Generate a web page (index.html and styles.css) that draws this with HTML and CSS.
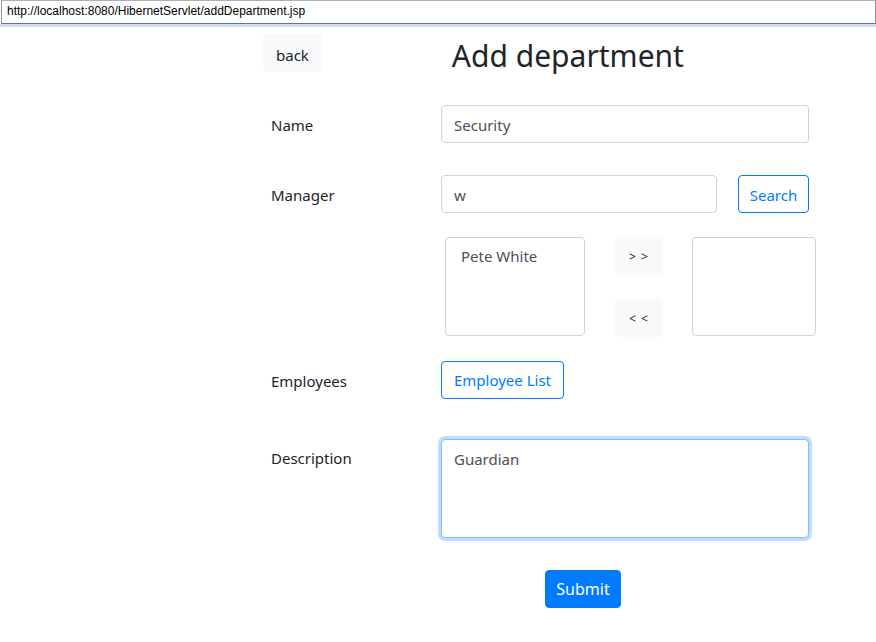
FILE: index.html
```html
<!DOCTYPE html>
<html lang="en">
<head>
<meta charset="utf-8">
<title>Add department</title>
<link rel="stylesheet" href="styles.css">
</head>
<body>
<div class="chrome">
  <div class="urlbar">http://localhost:8080/HibernetServlet/addDepartment.jsp</div>
</div>
<div class="strip"></div>
<main class="page">
  <header class="head">
    <button class="btn btn-light btn-back">back</button>
    <h2 class="title">Add department</h2>
  </header>
  <form class="form">
    <div class="row row-name">
      <label class="label">Name</label>
      <div class="control"><input class="input" type="text" value="Security"></div>
    </div>
    <div class="row row-manager">
      <label class="label">Manager</label>
      <div class="control split">
        <input class="input input-short" type="text" value="w">
        <button type="button" class="btn btn-outline btn-search">Search</button>
      </div>
    </div>
    <div class="row row-lists">
      <div class="label"></div>
      <div class="control lists">
        <div class="list list-left"><div class="opt">Pete White</div></div>
        <div class="movers">
          <button type="button" class="btn btn-light btn-move">&gt; &gt;</button>
          <button type="button" class="btn btn-light btn-move">&lt; &lt;</button>
        </div>
        <div class="list list-right"></div>
      </div>
    </div>
    <div class="row row-emp">
      <label class="label">Employees</label>
      <div class="control"><button type="button" class="btn btn-outline">Employee List</button></div>
    </div>
    <div class="row row-desc">
      <label class="label">Description</label>
      <div class="control"><textarea class="input area">Guardian</textarea></div>
    </div>
    <div class="submit-row">
      <button type="button" class="btn btn-primary">Submit</button>
    </div>
  </form>
</main>
</body>
</html>
```

FILE: styles.css
```css
html, body {
  margin: 0;
  padding: 0;
  background: #fff;
}
body {
  font-family: "Noto Sans", "Open Sans", sans-serif;
  font-size: 15px;
  line-height: 24px;
  color: #212529;
}
.chrome {
  padding-left: 1px;
  height: 24px;
}
.urlbar {
  box-sizing: border-box;
  height: 24px;
  border: 1px solid #8e949b;
  border-top-color: #a9b3c0;
  border-bottom-color: #6e7277;
  font-family: "Liberation Sans", Arial, sans-serif;
  font-size: 12px;
  line-height: 21px;
  padding-left: 5px;
  color: #000;
  background: #fff;
}
.strip {
  height: 3px;
  background: #cfdcee;
}
.page {
  margin-left: 263px;
  width: 553px;
}
.head {
  display: flex;
  align-items: flex-start;
  padding-top: 7px;
  height: 38px;
}
.title {
  margin: 0 0 0 130px;
  padding-top: 2px;
  font-size: 30px;
  font-weight: 400;
  line-height: 40px;
  color: #212529;
}
.btn {
  box-sizing: border-box;
  font-family: inherit;
  font-size: 15px;
  line-height: 24px;
  height: 38px;
  padding: 6px 12px;
  border: 1px solid transparent;
  border-radius: 4px;
  background: transparent;
  color: #212529;
  cursor: pointer;
}
.btn-back {
  padding: 8px 12px 4px;
}
.btn-light {
  background: #f8f9fa;
  border-color: #f8f9fa;
}
.btn-outline {
  color: #007bff;
  border-color: #007bff;
  background: #fff;
}
.btn-primary {
  background: #007bff;
  border-color: #007bff;
  color: #fff;
  font-size: 16px;
}
.form {
  margin: 0;
  padding-left: 8px;
}
.row {
  display: grid;
  grid-template-columns: 170px 368px;
  align-items: start;
}
.row-name {
  margin-top: 33px;
}
.row-manager {
  margin-top: 32px;
}
.row-lists {
  margin-top: 24px;
}
.row-emp {
  margin-top: 24px;
}
.row-desc {
  margin-top: 40px;
}
.label {
  padding-top: 8px;
  line-height: 24px;
}
.row-desc .label {
  padding-top: 7px;
}
.control {
  min-width: 0;
}
.input {
  box-sizing: border-box;
  display: block;
  width: 100%;
  height: 38px;
  padding: 7px 12px 5px;
  border: 1px solid #ced4da;
  border-radius: 4px;
  font-family: inherit;
  font-size: 15px;
  line-height: 24px;
  color: #495057;
  background: #fff;
  outline: none;
}
.split {
  display: flex;
  gap: 21px;
}
.input-short {
  width: 276px;
  flex: none;
}
.split .btn-search {
  width: 73px;
  padding: 7px 0 5px;
}
.lists {
  display: flex;
  align-items: flex-start;
  padding-left: 4px;
}
.list {
  box-sizing: border-box;
  height: 99px;
  border: 1px solid #ced4da;
  border-radius: 4px;
  background: #fff;
  flex: none;
}
.list-left {
  width: 140px;
  padding: 6px 15px;
  color: #495057;
}
.list-right {
  width: 124px;
  margin-left: 29px;
}
.movers {
  display: flex;
  flex-direction: column;
  gap: 24px;
  margin-left: 30px;
  flex: none;
}
.btn-move {
  width: 48px;
  height: 38px;
  padding: 0;
  font-size: 12px;
  letter-spacing: 1px;
  line-height: 38px;
}
.row-emp .btn {
  width: 123px;
  padding: 6px 0;
}
.area {
  height: 99px;
  resize: none;
  border-color: #80bdff;
  box-shadow: 0 0 0 3px rgba(0, 123, 255, 0.25);
  padding-top: 7px;
}
.submit-row {
  padding-left: 274px;
  margin-top: 32px;
}
.submit-row .btn {
  width: 76px;
  padding: 6px 0;
}
```
